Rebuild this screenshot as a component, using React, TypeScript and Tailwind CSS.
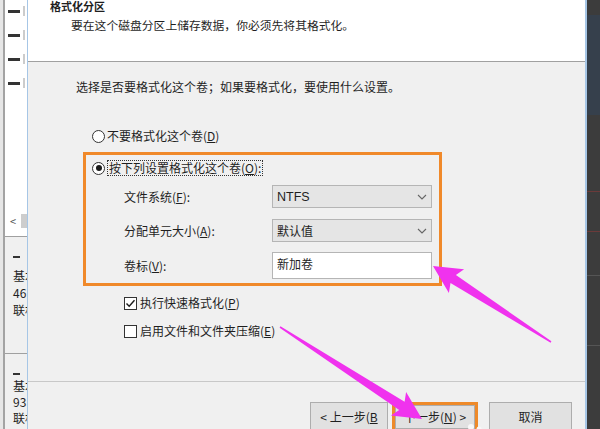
import React from "react";

function Radio({ checked }: { checked?: boolean }) {
  return (
    <span className="flex h-[13px] w-[13px] shrink-0 items-center justify-center rounded-full border border-[#333] bg-white">
      {checked && <span className="h-[6px] w-[6px] rounded-full bg-[#1a1a1a]" />}
    </span>
  );
}

function Check({ checked }: { checked?: boolean }) {
  return (
    <span className="flex h-[13px] w-[13px] shrink-0 items-center justify-center border border-[#333] bg-white">
      {checked && (
        <svg width="11" height="11" viewBox="0 0 11 11">
          <path d="M1.5 5.5 L4.2 8.3 L9.5 2.2" fill="none" stroke="#1a1a1a" strokeWidth="1.4" />
        </svg>
      )}
    </span>
  );
}

function Chevron() {
  return (
    <svg width="10" height="6" viewBox="0 0 10 6" className="mr-[4px]">
      <path d="M1 1 L5 5 L9 1" fill="none" stroke="#666" strokeWidth="1.1" />
    </svg>
  );
}

export default function App() {
  return (
    <div className="relative flex h-[429px] w-[600px] overflow-hidden bg-[#f0f0f0] font-['Noto_Sans_CJK_SC',sans-serif] text-[12px] leading-[16px] text-[#1f1f1f]">
      {/* left strip */}
      <div className="flex w-[27px] shrink-0">
        <div className="w-[3px] bg-[#e6e6e6]" />
        <div className="w-[2px] bg-[#a3a3a3]" />
        <div className="flex min-w-0 flex-1 flex-col overflow-hidden">
          <div className="flex h-[236px] flex-col bg-white">
            <div className="flex flex-col gap-[14px] pl-[3px] pt-[6px]">
              {[0, 1, 2, 3].map((i) => (
                <div key={i} className="flex items-center gap-[3px]">
                  <span className="h-[3px] w-[12px] bg-[#333]" />
                  <span className="h-[10px] w-[2px] bg-[#ccc]" />
                </div>
              ))}
            </div>
            <div className="flex-1" />
            <div className="mb-[8px] flex h-[14px] items-center">
              <span className="ml-[5px] text-[11px] leading-[14px] text-[#555]">&lt;</span>
              <span className="ml-auto h-[14px] w-[6px] bg-[#cdcdcd]" />
            </div>
          </div>
          <div className="flex h-[117px] flex-col border-t border-[#a0a0a0] pl-[8px] pt-[19px] text-[12px] leading-[17px] whitespace-nowrap">
            <span className="mb-[9px] h-[2px] w-[7px] bg-[#333]" />
            <span>基本</span>
            <span>46</span>
            <span>联机</span>
          </div>
          <div className="flex flex-1 flex-col border-t border-[#a0a0a0] pl-[8px] pt-[19px] text-[12px] leading-[16px] whitespace-nowrap">
            <span className="mb-[3px] h-[2px] w-[7px] bg-[#333]" />
            <span>基本</span>
            <span>93</span>
            <span>联机</span>
          </div>
        </div>
      </div>

      {/* dialog */}
      <div className="flex min-w-0 flex-1 flex-col border-l border-r-2 border-[#a6c6e6]">
        <div className="h-[62px] shrink-0 border-b border-[#a0a0a0] bg-white">
          <div className="-mt-[2px] pl-[22px] text-[11px] font-bold">格式化分区</div>
          <div className="mt-[3px] pl-[43px] text-[11.8px]">要在这个磁盘分区上储存数据，你必须先将其格式化。</div>
        </div>

        <div className="flex flex-1 flex-col">
          <div className="mt-[17px] h-[16px] pl-[48px]">选择是否要格式化这个卷；如果要格式化，要使用什么设置。</div>

          <div className="ml-[64px] mt-[33px] flex h-[16px] items-center gap-[2px]">
            <Radio />
            <span>
              不要格式化这个卷(<u>D</u>)
            </span>
          </div>

          <div className="ml-[55px] mt-[8px] flex w-[359px] flex-col border-[3px] border-[#f0892a] pb-[4px]">
            <div className="ml-[6px] mt-[5px] flex h-[16px] items-center gap-[2px]">
              <Radio checked />
              <span className="border border-dotted border-[#333] px-[1px] leading-[14px]">
                按下列设置格式化这个卷(<u>O</u>):
              </span>
            </div>
            <div className="ml-[38px] mt-[9px] flex h-[23px] items-center">
              <span className="w-[148px]">
                文件系统(<u>F</u>):
              </span>
              <div className="flex h-[23px] w-[160px] items-center justify-between border border-[#b5b5b5] bg-[#e5e5e5] pl-[4px]">
                <span className="font-['Liberation_Sans',sans-serif] text-[12.5px]">NTFS</span>
                <Chevron />
              </div>
            </div>
            <div className="ml-[38px] mt-[11px] flex h-[23px] items-center">
              <span className="w-[148px]">
                分配单元大小(<u>A</u>):
              </span>
              <div className="flex h-[23px] w-[160px] items-center justify-between border border-[#b5b5b5] bg-[#e5e5e5] pl-[4px]">
                <span>默认值</span>
                <Chevron />
              </div>
            </div>
            <div className="ml-[38px] mt-[10px] flex h-[27px] items-center">
              <span className="w-[148px]">
                卷标(<u>V</u>):
              </span>
              <div className="flex h-[27px] w-[160px] items-start border border-[#b5b5b5] bg-white pl-[4px] pt-[3px]">
                <span>新加卷</span>
              </div>
            </div>
          </div>

          <div className="ml-[96px] mt-[9px] flex h-[16px] items-center gap-[3px]">
            <Check checked />
            <span>
              执行快速格式化(<u>P</u>)
            </span>
          </div>
          <div className="ml-[96px] mt-[12px] flex h-[16px] items-center gap-[3px]">
            <Check />
            <span>
              启用文件和文件夹压缩(<u>E</u>)
            </span>
          </div>
        </div>

        <div className="flex h-[48px] shrink-0 justify-end border-t border-[#c8c8c8] pr-[13px] pt-[20px]">
          <div className="flex h-[30px] w-[78px] items-center justify-center border border-[#adadad] bg-[#e1e1e1]">
            &lt; 上一步(<u>B</u>
          </div>
          <div className="ml-[4px] h-[30px] w-[86px] border-[3px] border-[#ee8a2a]">
            <div className="flex h-full w-full items-center justify-center border border-[#adadad] bg-[#e1e1e1]">
              下一步(<u>N</u>) &gt;
            </div>
          </div>
          <div className="ml-[11px] flex h-[30px] w-[83px] items-center justify-center border border-[#adadad] bg-[#e1e1e1]">
            取消
          </div>
        </div>
      </div>

      {/* dark right strip */}
      <div className="flex w-[13px] shrink-0 flex-col bg-[#3c3c3c]">
        <div className="mt-[15px] h-[100px] bg-[#36404c]" />
        <div className="mt-[76px] h-[1px] bg-[#6b3a3a]" />
        <div className="mt-[39px] h-[1px] bg-[#6b3a3a]" />
        <div className="mt-[43px] h-[1px] bg-[#555]" />
        <div className="mt-[69px] h-[1px] bg-[#555]" />
      </div>

      {/* annotation arrows */}
      <svg className="pointer-events-none absolute left-0 top-0" width="600" height="429" viewBox="0 0 600 429">
        <polygon
          points="433,266 464.1,269.3 455.9,275 551.4,341.3 550.6,342.7 450.5,283 448.9,292.9"
          fill="#f032ee"
        />
        <polygon
          points="422,419 406.1,392.1 404.6,401.7 280.4,326.3 279.6,327.7 399.2,410.1 390.9,415.5"
          fill="#f032ee"
        />
        <circle cx="471" cy="427" r="3" fill="#f8f8f8" />
        <circle cx="479" cy="429" r="2.5" fill="#f8f8f8" />
      </svg>
    </div>
  );
}
